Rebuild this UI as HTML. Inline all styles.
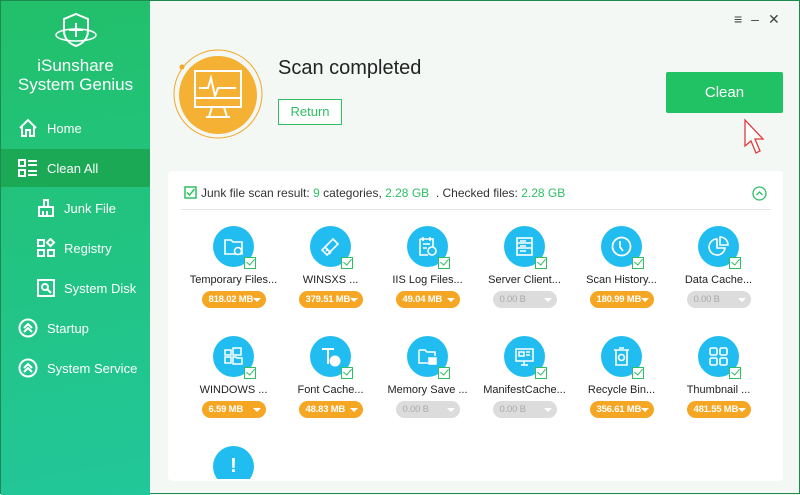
<!DOCTYPE html>
<html><head><meta charset="utf-8"><style>
*{margin:0;padding:0;box-sizing:border-box}
body{width:800px;height:494px;overflow:hidden;font-family:"Liberation Sans",sans-serif;background:#f3f8f5;position:relative;border:1px solid #1c8a4e}
.side{position:absolute;left:0;top:0;width:149px;height:494px;background:linear-gradient(170deg,#22c06a,#22c79a)}
.brand{position:absolute;top:55px;width:149px;text-align:center;color:#fff;font-size:17px;line-height:19px}
.mi{position:absolute;left:0;width:149px;height:38px;color:#fff;font-size:13px;display:flex;align-items:center}
.mi svg{position:absolute;left:17px}
.mi span{position:absolute;left:46px}
.sub span{left:63px}.sub svg{left:35px}
.card{position:absolute;left:167px;top:170px;width:615px;height:310px;background:#fff;border-radius:4px}
.it{position:absolute;width:97px;text-align:center}
.ci{width:41px;height:41px;border-radius:50%;background:#22bdf0;margin:0 auto;position:relative}
.ci svg{position:absolute;left:10px;top:10px}
.ck{position:absolute;left:59px;top:31px;width:12px;height:12px;border:1.5px solid #2fbf63;background:#fff}
.ck:after{content:"";position:absolute;left:3px;top:-1px;width:4px;height:7px;border:solid #2fbf63;border-width:0 1.5px 1.5px 0;transform:rotate(40deg)}
.lb{font-size:11px;color:#222;margin-top:7px;white-space:nowrap}
.pl{display:inline-block;margin-top:5px;width:64px;height:17px;border-radius:9px;background:#f5a623;color:#fff;font-size:9.5px;font-weight:bold;letter-spacing:-0.2px;line-height:17px;text-align:left;padding-left:7px;position:relative}
.pl:after{content:"";position:absolute;right:5px;top:7px;border:4px solid transparent;border-top:4px solid #fff}
.pl.g{background:#dcdcdc;color:#aaa;font-weight:normal}
</style></head><body>
<div class="side">
<svg style="position:absolute;left:52px;top:10px" width="46" height="40" viewBox="0 0 46 40" fill="none" stroke="#fff" stroke-width="2"><path d="M23 3 L35 8 V20 C35 28 29 33 23 35 C17 33 11 28 11 20 V8Z"/><path d="M23 12v14M16 19h14"/><ellipse cx="23" cy="24" rx="20" ry="6" stroke-width="1.5"/></svg>
<div class="brand">iSunshare<br>System Genius</div>
<div class="mi" style="top:108px"><svg width="20" height="20" viewBox="0 0 20 20" fill="none" stroke="#fff" stroke-width="2"><path d="M2 10 L10 2 L18 10M4 8v10h4v-6h4v6h4V8"/></svg><span>Home</span></div>
<div class="mi" style="top:148px;background:#1ca955"><svg width="20" height="20" viewBox="0 0 20 20" fill="none" stroke="#fff" stroke-width="2"><rect x="1" y="2" width="6" height="6"/><rect x="1" y="12" width="6" height="6"/><path d="M10 3h9M10 7h9M10 13h9M10 17h9"/></svg><span>Clean All</span></div>
<div class="mi sub" style="top:188px"><svg width="20" height="20" viewBox="0 0 20 20" fill="none" stroke="#fff" stroke-width="2"><path d="M8 2h4v7H8zM3 9h14v9H3zM7 13v5M11 13v5"/></svg><span>Junk File</span></div>
<div class="mi sub" style="top:228px"><svg width="20" height="20" viewBox="0 0 20 20" fill="none" stroke="#fff" stroke-width="2"><rect x="2" y="2" width="6" height="6"/><rect x="2" y="12" width="6" height="6"/><rect x="12" y="12" width="6" height="6"/><rect x="12" y="2" width="5" height="5" transform="rotate(45 14.5 4.5)"/></svg><span>Registry</span></div>
<div class="mi sub" style="top:268px"><svg width="20" height="20" viewBox="0 0 20 20" fill="none" stroke="#fff" stroke-width="2"><rect x="2" y="2" width="16" height="16"/><circle cx="9" cy="9" r="3"/><path d="M11 11l4 4"/></svg><span>System Disk</span></div>
<div class="mi" style="top:308px"><svg width="20" height="20" viewBox="0 0 20 20" fill="none" stroke="#fff" stroke-width="2"><circle cx="10" cy="10" r="8.5"/><path d="M6 10l4-4 4 4M6 14l4-4 4 4"/></svg><span>Startup</span></div>
<div class="mi" style="top:348px"><svg width="20" height="20" viewBox="0 0 20 20" fill="none" stroke="#fff" stroke-width="2"><circle cx="10" cy="10" r="8.5"/><path d="M6 10l4-4 4 4M6 14l4-4 4 4"/></svg><span>System Service</span></div>
</div>
<div style="position:absolute;left:733px;top:10px;font-size:14px;color:#444;letter-spacing:9px">≡–✕</div>
<svg style="position:absolute;left:170px;top:45px" width="95" height="95" viewBox="0 0 95 95"><circle cx="47" cy="48" r="44" fill="none" stroke="#f5a623" stroke-width="1"/><circle cx="47" cy="49" r="39" fill="#f5b133"/><circle cx="11" cy="21" r="2.5" fill="#f5a623"/><g fill="none" stroke="#fff" stroke-width="2"><rect x="24" y="25" width="46" height="36"/><path d="M24 52h46M41 61l-3 10h18l-3-10M35 71h24M28 42h9l3-10 4 18 3-8h18"/></g></svg>
<div style="position:absolute;left:277px;top:56px;font-size:20px;color:#222">Scan completed</div>
<div style="position:absolute;left:277px;top:98px;width:64px;height:26px;border:1px solid #2fbf63;color:#2fbf63;font-size:13px;text-align:center;line-height:24px;background:#fff">Return</div>
<div style="position:absolute;left:665px;top:71px;width:117px;height:41px;background:#21c263;color:#fff;font-size:15px;text-align:center;line-height:41px;border-radius:2px">Clean</div>
<svg style="position:absolute;left:742px;top:117px" width="22" height="38" viewBox="0 0 22 38"><path d="M2 2 L2 28 L8 23 L13 35 L17 33 L12 21 L20 21Z" fill="#fff" stroke="#e23b3b" stroke-width="1.3"/></svg>
<div class="card">
<svg style="position:absolute;left:16px;top:15px" width="13" height="13" viewBox="0 0 13 13" fill="none" stroke="#2fbf63" stroke-width="1.5"><rect x="1" y="1" width="11" height="11"/><path d="M3 6.5l2.5 2.5 5-6"/></svg>
<div style="position:absolute;left:33px;top:15px;font-size:12px;color:#333">Junk file scan result: <span style="color:#2fbf63">9</span> categories, <span style="color:#2fbf63">2.28 GB</span> &nbsp;. Checked files: <span style="color:#2fbf63">2.28 GB</span></div>
<svg style="position:absolute;left:584px;top:15px" width="15" height="15" viewBox="0 0 15 15" fill="none" stroke="#2fbf63" stroke-width="1.3"><circle cx="7.5" cy="7.5" r="6.5"/><path d="M4.5 9l3-3 3 3"/></svg>
<div style="position:absolute;left:13px;top:38px;width:590px;height:1px;background:#e5e5e5"></div>
</div>
<div class="it" style="left:184px;top:225px"><div class="ci"><svg width="21" height="21" viewBox="0 0 21 21" fill="none" stroke="#fff" stroke-width="1.6"><path d="M2 4h6l2 2h9v12H2z"/><circle cx="15" cy="15" r="3.5" fill="#22bdf0"/></svg></div><div class="ck"></div><div class="lb">Temporary Files...</div><div class="pl">818.02 MB</div></div>
<div class="it" style="left:281px;top:225px"><div class="ci"><svg width="21" height="21" viewBox="0 0 21 21" fill="none" stroke="#fff" stroke-width="1.6"><path d="M13 3l5 5-8 8-5-5zM5 11l-3 3 5 5 3-3M6 15l2-2M9 18l2-2"/></svg></div><div class="ck"></div><div class="lb">WINSXS ...</div><div class="pl">379.51 MB</div></div>
<div class="it" style="left:378px;top:225px"><div class="ci"><svg width="21" height="21" viewBox="0 0 21 21" fill="none" stroke="#fff" stroke-width="1.6"><path d="M3 3h13v8M3 3v16h8M6 8h7M6 12h4M6 1v4M13 1v4"/><circle cx="15" cy="15" r="4"/></svg></div><div class="ck"></div><div class="lb">IIS Log Files...</div><div class="pl">49.04 MB</div></div>
<div class="it" style="left:475px;top:225px"><div class="ci"><svg width="21" height="21" viewBox="0 0 21 21" fill="none" stroke="#fff" stroke-width="1.6"><rect x="3" y="2" width="15" height="17"/><path d="M3 7h15M3 12h15M6 5h6M6 10h6M6 15h6"/></svg></div><div class="ck"></div><div class="lb">Server Client...</div><div class="pl g">0.00 B</div></div>
<div class="it" style="left:572px;top:225px"><div class="ci"><svg width="21" height="21" viewBox="0 0 21 21" fill="none" stroke="#fff" stroke-width="1.8"><circle cx="10.5" cy="10.5" r="9"/><path d="M9 5v6l3 4"/></svg></div><div class="ck"></div><div class="lb">Scan History...</div><div class="pl">180.99 MB</div></div>
<div class="it" style="left:669px;top:225px"><div class="ci"><svg width="21" height="21" viewBox="0 0 21 21" fill="none" stroke="#fff" stroke-width="1.6"><path d="M9 3a8 8 0 1 0 8 9H9zM12 1a8 8 0 0 1 8 8h-8z"/></svg></div><div class="ck"></div><div class="lb">Data Cache...</div><div class="pl g">0.00 B</div></div>
<div class="it" style="left:184px;top:335px"><div class="ci"><svg width="21" height="21" viewBox="0 0 21 21" fill="none" stroke="#fff" stroke-width="1.5"><rect x="2" y="4" width="6" height="5"/><rect x="10" y="2" width="8" height="7"/><rect x="2" y="11" width="6" height="6"/><path d="M10 11h3l1 1h5v6h-9z"/></svg></div><div class="ck"></div><div class="lb">WINDOWS ...</div><div class="pl">6.59 MB</div></div>
<div class="it" style="left:281px;top:335px"><div class="ci"><svg width="21" height="21" viewBox="0 0 21 21" fill="none" stroke="#fff" stroke-width="2"><path d="M2 3h12M8 3v15"/><circle cx="15" cy="15" r="4.5" fill="#fff"/></svg></div><div class="ck"></div><div class="lb">Font Cache...</div><div class="pl">48.83 MB</div></div>
<div class="it" style="left:378px;top:335px"><div class="ci"><svg width="21" height="21" viewBox="0 0 21 21" fill="none" stroke="#fff" stroke-width="1.5"><path d="M2 4h6l2 2h8v4M2 4v13h9"/><rect x="12" y="12" width="7" height="6" fill="#fff"/></svg></div><div class="ck"></div><div class="lb">Memory Save ...</div><div class="pl g">0.00 B</div></div>
<div class="it" style="left:475px;top:335px"><div class="ci"><svg width="21" height="21" viewBox="0 0 21 21" fill="none" stroke="#fff" stroke-width="1.5"><rect x="2" y="3" width="17" height="12"/><path d="M7 19h7M10 15v4M5 6h5v4H5zM12 6h4M12 9h4"/></svg></div><div class="ck"></div><div class="lb">ManifestCache...</div><div class="pl g">0.00 B</div></div>
<div class="it" style="left:572px;top:335px"><div class="ci"><svg width="21" height="21" viewBox="0 0 21 21" fill="none" stroke="#fff" stroke-width="1.6"><path d="M3 4h15M5 4v15h11V4M8 2h5"/><circle cx="10.5" cy="11.5" r="3"/></svg></div><div class="ck"></div><div class="lb">Recycle Bin...</div><div class="pl">356.61 MB</div></div>
<div class="it" style="left:669px;top:335px"><div class="ci"><svg width="21" height="21" viewBox="0 0 21 21" fill="none" stroke="#fff" stroke-width="1.6"><rect x="2" y="2" width="7" height="7" rx="1.5"/><rect x="12" y="2" width="7" height="7" rx="1.5"/><rect x="2" y="12" width="7" height="7" rx="1.5"/><rect x="12" y="12" width="7" height="7" rx="1.5"/></svg></div><div class="ck"></div><div class="lb">Thumbnail ...</div><div class="pl">481.55 MB</div></div>
<div class="it" style="left:184px;top:445px;height:33px;overflow:hidden"><div class="ci" style="color:#fff;font-weight:bold;font-size:20px;line-height:40px">!</div></div>
</body></html>
